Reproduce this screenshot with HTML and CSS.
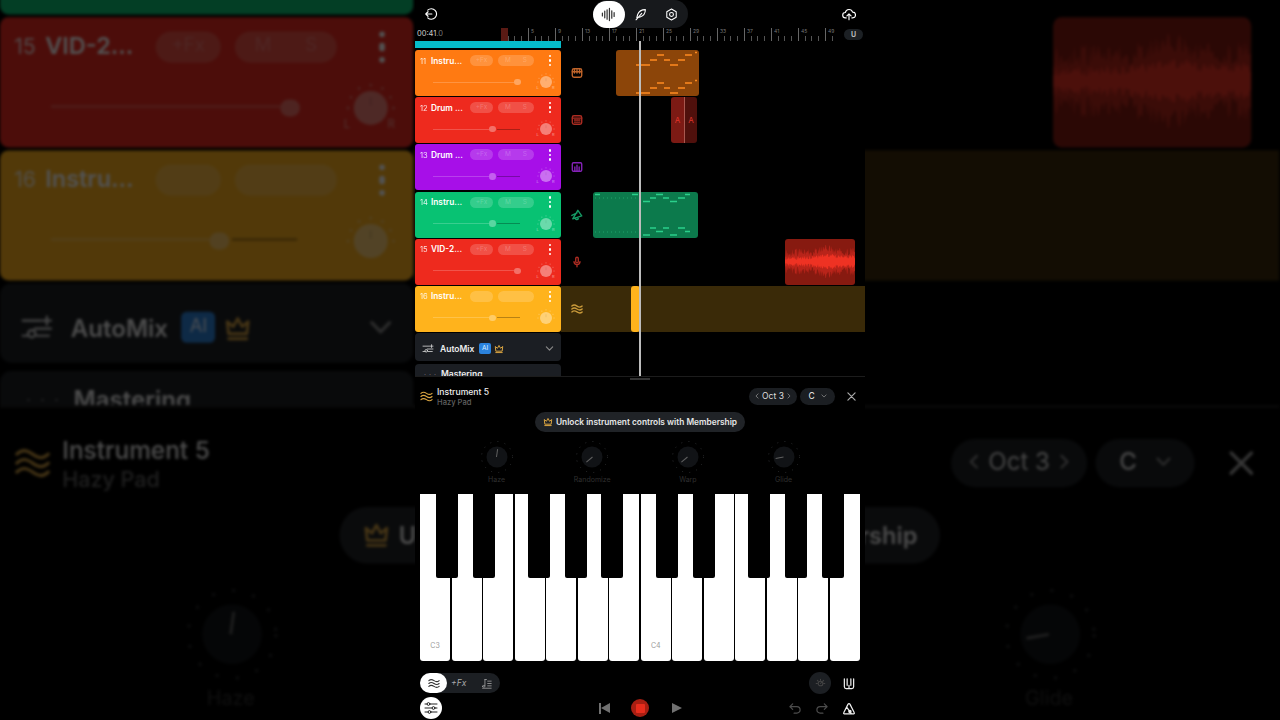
FILE: index.html
```html
<!DOCTYPE html>
<html lang="en">
<head>
    <meta charset="UTF-8">
    <meta name="viewport" content="width=device-width, initial-scale=1.0">
    <title>Instrument 5 - Hazy Pad</title>
    <link rel="stylesheet" href="styles.css">
</head>
<body>
    <svg class="sprite" xmlns="http://www.w3.org/2000/svg">
        <symbol id="i-back" viewBox="0 0 16 16"><path d="M4.300 3.600a6 6 0 1 1 0 8.800M9 8H2M4.600 5.400 2 8l2.600 2.600"/></symbol>
        <symbol id="i-bars" viewBox="0 0 16 16"><path d="M1.500 6.500v3M4 4.500v7M6.500 3v10M9 1.500v13M11.500 4v8M14 6v4"/></symbol>
        <symbol id="i-feather" viewBox="0 0 16 16"><path d="M14 2C9.500 2 6 4 4.500 8l-1 4 4-1C11.500 9.500 14 6.500 14 2zM2.500 14.500 9.500 6.500"/></symbol>
        <symbol id="i-hex" viewBox="0 0 16 16"><path d="M8 1.300 13.800 4.600v6.800L8 14.700 2.200 11.400V4.600z"/><circle cx="8" cy="8" r="2.400"/></symbol>
        <symbol id="i-cloud" viewBox="0 0 16 16"><path d="M4.800 12.500H4a3.100 3.100 0 0 1-.2-6.200 4.300 4.300 0 0 1 8.300-.4 3.300 3.300 0 0 1 .1 6.600h-.9M8 14.500V8M5.600 10.200 8 7.800l2.400 2.400"/></symbol>
        <symbol id="i-wave" viewBox="0 0 14 12"><path d="M1 2.600c2-1.800 3.400-1.800 6 0s4 1.800 6 0M1 6c2-1.800 3.400-1.800 6 0s4 1.800 6 0M1 9.400c2-1.800 3.400-1.800 6 0s4 1.800 6 0"/></symbol>
        <symbol id="i-crown" viewBox="0 0 14 14"><path d="M2.500 9.500 1.800 3.500 4.800 6 7 2l2.200 4 3-2.500-.7 6zM2.500 12h9"/></symbol>
        <symbol id="i-sliders" viewBox="0 0 16 14"><path d="M1 3h9M13 1v4M11 3h4M7 7h8M1 10.500h3M8 10.500h6"/><circle cx="5.500" cy="9.500" r="1.800"/></symbol>
        <symbol id="i-mixer" viewBox="0 0 14 14"><path d="M1 3h2M6 3h7M1 7h7M11 7h2M1 11h3M7 11h6"/><circle cx="4.500" cy="3" r="1.400"/><circle cx="9.500" cy="7" r="1.400"/><circle cx="5.500" cy="11" r="1.400"/></symbol>
        <symbol id="i-chevron" viewBox="0 0 10 10"><path d="M1.500 3.200 5 6.800l3.500-3.600"/></symbol>
        <symbol id="i-keys" viewBox="0 0 14 14"><rect x="1.500" y="2" width="11" height="10" rx="2"/><path d="M1.500 5.500h11M4 3v4M7 3v4M10 3v4"/></symbol>
        <symbol id="i-drum" viewBox="0 0 14 14"><rect x="1.500" y="2" width="11" height="10" rx="2"/><path d="M1.500 4.800h11M4 7h1.500M6.500 7H8M9 7h1.500M4 9.500h1.500M6.500 9.500H8M9 9.500h1.500"/></symbol>
        <symbol id="i-pad" viewBox="0 0 14 14"><rect x="1.500" y="2" width="11" height="10" rx="1.500"/><path d="M4.500 11V7M7 11V5M9.500 11V7"/></symbol>
        <symbol id="i-horn" viewBox="0 0 14 14"><path d="M8 1.500 12.500 8 2 11.500zM5 10.500c0 2 2.500 2.500 3.500 1L7.800 9.500M1 7.500l6-3"/></symbol>
        <symbol id="i-mic" viewBox="0 0 14 14"><rect x="5.500" y="1.500" width="3" height="6.500" rx="1.500" class="solid"/><path d="M3.500 6.500a3.500 3.500 0 0 0 7 0M7 10v2.500"/></symbol>
        <symbol id="i-notes" viewBox="0 0 14 14"><path d="M5 2v8M2 10.500c0-1.500 3-1.500 3 0s-3 1.500-3 0zM5 2h2M8.500 4H13M8.500 7H13M2 13h11M8.500 10H13"/></symbol>
        <symbol id="i-close" viewBox="0 0 10 10"><path d="M1 1l8 8M9 1 1 9"/></symbol>
        <symbol id="i-piano" viewBox="0 0 14 14"><path d="M2 2v8.500a2 2 0 0 0 2 2h6a2 2 0 0 0 2-2V2M5 2v7M7 9v3.500M9 2v7"/></symbol>
        <symbol id="i-undo" viewBox="0 0 14 14"><path d="M4.500 2 1.500 5l3 3M1.500 5H9a3.500 3.500 0 0 1 0 7H6"/></symbol>
        <symbol id="i-redo" viewBox="0 0 14 14"><path d="M9.500 2l3 3-3 3M12.500 5H5a3.500 3.500 0 0 0 0 7h3"/></symbol>
        <symbol id="i-metro" viewBox="0 0 14 14"><path d="M6 2.300a1.100 1.100 0 0 1 2 0l4.700 9.300a.8.800 0 0 1-.7 1.200H2a.8.800 0 0 1-.7-1.200zM4.500 5.500 9.500 12.500"/><circle cx="8" cy="10.300" r="1.200" class="solid-metro"/></symbol>
        <symbol id="i-gear" viewBox="0 0 14 14"><circle cx="7" cy="7" r="3"/><path d="M7 1.500v1.500M11 3l-1 1M12.500 7H11M3 3l1 1M1.500 7H3M7 7l2-2"/></symbol>
        <symbol id="i-pan" viewBox="0 0 24 24"><circle cx="12" cy="12" r="8" class="pan-face"/><path class="pan-tick" d="M12 7v4"/><path class="pan-dots" d="M12 1.200v.1M17.500 2.800v.1M21.300 7v.1M22.700 12v.1M6.500 2.800v.1M2.700 7v.1M1.300 12v.1"/></symbol>
        <symbol id="i-knob" viewBox="0 0 34 34"><circle cx="17" cy="17" r="10.500" class="knob-face"/><circle cx="17" cy="17" r="15.500" class="knob-dots"/></symbol>
    </svg>

    <div class="page">
        <div class="side side-left"></div>

        <main class="stage" id="stage">
            <header class="topbar">
                <div class="topbar-left"><svg class="icon icon-back"><use href="#i-back"/></svg></div>
                <nav class="mode-pill">
                    <span class="mode-active"><svg class="icon icon-mode"><use href="#i-bars"/></svg></span>
                    <span class="mode-item"><svg class="icon icon-mode-w"><use href="#i-feather"/></svg></span>
                    <span class="mode-item"><svg class="icon icon-mode-w"><use href="#i-hex"/></svg></span>
                </nav>
                <div class="topbar-right"><svg class="icon icon-cloud"><use href="#i-cloud"/></svg></div>
            </header>

            <div class="ruler">
                <div class="time">00:41<span class="time-dim">.0</span></div>
                <div class="bars">
                    <span class="loop-mark"></span>
                    <span class="bar">1</span><span class="bar">5</span><span class="bar">9</span><span class="bar">13</span><span class="bar">17</span><span class="bar">21</span><span class="bar">25</span><span class="bar">29</span><span class="bar">33</span><span class="bar">37</span><span class="bar">41</span><span class="bar">45</span><span class="bar bar-end">49</span>
                </div>
                <span class="magnet">U</span>
            </div>

            <div class="arrange">
                <div class="track-col">
                    <div class="cyan-bar"></div>

                    <div class="track orange">
                        <div class="track-top"><span class="track-name"><span class="num">11</span>Instru...</span><span class="pill fx">+Fx</span><span class="pill ms"><span>M</span><span>S</span></span><span class="more"><i></i><i></i><i></i></span></div>
                        <div class="track-bottom"><div class="slider level-full"><span class="fill"></span><span class="thumb"></span></div><div class="pan"><svg><use href="#i-pan"/></svg><span class="pan-l">L</span><span class="pan-r">R</span></div></div>
                    </div>
                    <div class="track red">
                        <div class="track-top"><span class="track-name"><span class="num">12</span>Drum ...</span><span class="pill fx">+Fx</span><span class="pill ms"><span>M</span><span>S</span></span><span class="more"><i></i><i></i><i></i></span></div>
                        <div class="track-bottom"><div class="slider level-mid"><span class="fill"></span><span class="thumb"></span><span class="rest"></span></div><div class="pan"><svg><use href="#i-pan"/></svg><span class="pan-l">L</span><span class="pan-r">R</span></div></div>
                    </div>
                    <div class="track purple">
                        <div class="track-top"><span class="track-name"><span class="num">13</span>Drum ...</span><span class="pill fx">+Fx</span><span class="pill ms"><span>M</span><span>S</span></span><span class="more"><i></i><i></i><i></i></span></div>
                        <div class="track-bottom"><div class="slider level-mid"><span class="fill"></span><span class="thumb"></span><span class="rest"></span></div><div class="pan"><svg><use href="#i-pan"/></svg><span class="pan-l">L</span><span class="pan-r">R</span></div></div>
                    </div>
                    <div class="track green">
                        <div class="track-top"><span class="track-name"><span class="num">14</span>Instru...</span><span class="pill fx">+Fx</span><span class="pill ms"><span>M</span><span>S</span></span><span class="more"><i></i><i></i><i></i></span></div>
                        <div class="track-bottom"><div class="slider level-mid"><span class="fill"></span><span class="thumb"></span><span class="rest"></span></div><div class="pan"><svg><use href="#i-pan"/></svg><span class="pan-l">L</span><span class="pan-r">R</span></div></div>
                    </div>
                    <div class="track red">
                        <div class="track-top"><span class="track-name"><span class="num">15</span>VID-2...</span><span class="pill fx">+Fx</span><span class="pill ms"><span>M</span><span>S</span></span><span class="more"><i></i><i></i><i></i></span></div>
                        <div class="track-bottom"><div class="slider level-full"><span class="fill"></span><span class="thumb"></span></div><div class="pan"><svg><use href="#i-pan"/></svg><span class="pan-l">L</span><span class="pan-r">R</span></div></div>
                    </div>
                    <div class="track amber">
                        <div class="track-top"><span class="track-name"><span class="num">16</span>Instru...</span><span class="pill fx"></span><span class="pill ms"></span><span class="more"><i></i><i></i><i></i></span></div>
                        <div class="track-bottom"><div class="slider level-mid"><span class="fill"></span><span class="thumb"></span><span class="rest"></span></div><div class="pan"><svg><use href="#i-pan"/></svg></div></div>
                    </div>

                    <div class="card">
                        <svg class="icon card-icon"><use href="#i-sliders"/></svg>
                        <span class="card-title">AutoMix</span>
                        <span class="ai-badge">AI</span>
                        <svg class="icon crown"><use href="#i-crown"/></svg>
                        <svg class="icon card-chevron"><use href="#i-chevron"/></svg>
                    </div>
                    <div class="card card-next">
                        <span class="card-dots">&#8942;&#8942;&#8942;</span>
                        <span class="card-title">Mastering</span>
                    </div>
                </div>

                <div class="lane-col">
                    <div class="lane c-orange">
                        <svg class="icon lane-icon"><use href="#i-keys"/></svg>
                        <svg class="clip clip-11" viewBox="0 0 83 46"><path class="dash" d="M41 5h7M69 5h7M34 10h7M48 10h6M62 10h7M27 15h7M54 15h8M20 15h7M41 33h7M69 33h7M34 38h7M48 38h6M62 38h7M27 43h7M54 43h8M20 43h7M79 2.500h2M79 30.500h2"/></svg>
                    </div>
                    <div class="lane c-red">
                        <svg class="icon lane-icon"><use href="#i-drum"/></svg>
                        <div class="clip clip-12"><span class="drum-a">A</span><span class="drum-b">A</span></div>
                    </div>
                    <div class="lane c-purple">
                        <svg class="icon lane-icon"><use href="#i-pad"/></svg>
                    </div>
                    <div class="lane c-green">
                        <svg class="icon lane-icon"><use href="#i-horn"/></svg>
                        <svg class="clip clip-14" viewBox="0 0 105 46"><path class="dash-g" d="M2 2.500h5M39 2.500h6M63 2.500h7M92 2.500h5M57 6h6M70 6h6M85 6h7M50 9.500h7M77 9.500h7M57 36h6M70 36h6M85 36h7M63 39.500h7M92 39.500h5M50 43h7M77 43h7"/><path class="dots-g" d="M2 6h45M2 40h45"/></svg>
                    </div>
                    <div class="lane c-red">
                        <svg class="icon lane-icon"><use href="#i-mic"/></svg>
                        <svg class="clip clip-15" id="waveClip" viewBox="0 0 70 46"></svg>
                    </div>
                    <div class="lane lane-active c-amber">
                        <svg class="icon lane-icon"><use href="#i-wave"/></svg>
                        <div class="clip clip-16"></div>
                    </div>
                </div>

                <div class="playhead"></div>
            </div>

            <section class="panel">
                <div class="handle"></div>
                <div class="panel-head">
                    <svg class="icon head-wave"><use href="#i-wave"/></svg>
                    <div class="head-text">
                        <div class="head-title">Instrument 5</div>
                        <div class="head-sub">Hazy Pad</div>
                    </div>
                    <div class="oct-pill"><svg class="icon pill-arrow arrow-left"><use href="#i-chevron"/></svg>Oct 3<svg class="icon pill-arrow arrow-right"><use href="#i-chevron"/></svg></div>
                    <div class="key-pill">C<svg class="icon pill-chevron"><use href="#i-chevron"/></svg></div>
                    <svg class="icon head-close"><use href="#i-close"/></svg>
                </div>

                <div class="unlock-row">
                    <div class="unlock"><svg class="icon crown"><use href="#i-crown"/></svg>Unlock instrument controls with Membership</div>
                </div>

                <div class="knobs">
                    <div class="knob"><div class="knob-dial"><svg><use href="#i-knob"/></svg><span class="needle needle-haze"></span></div><span class="knob-label">Haze</span></div>
                    <div class="knob"><div class="knob-dial"><svg><use href="#i-knob"/></svg><span class="needle needle-rand"></span></div><span class="knob-label">Randomize</span></div>
                    <div class="knob"><div class="knob-dial"><svg><use href="#i-knob"/></svg><span class="needle needle-warp"></span></div><span class="knob-label">Warp</span></div>
                    <div class="knob"><div class="knob-dial"><svg><use href="#i-knob"/></svg><span class="needle needle-glide"></span></div><span class="knob-label">Glide</span></div>
                </div>

                <div class="keyboard">
                    <div class="white-key">C3</div><div class="white-key"></div><div class="white-key"></div><div class="white-key"></div><div class="white-key"></div><div class="white-key"></div><div class="white-key"></div>
                    <div class="white-key">C4</div><div class="white-key"></div><div class="white-key"></div><div class="white-key"></div><div class="white-key"></div><div class="white-key"></div><div class="white-key"></div>
                    <span class="black-key b1"></span><span class="black-key b2"></span><span class="black-key b3"></span><span class="black-key b4"></span><span class="black-key b5"></span>
                    <span class="black-key b6"></span><span class="black-key b7"></span><span class="black-key b8"></span><span class="black-key b9"></span><span class="black-key b10"></span>
                </div>

                <div class="tools-row">
                    <div class="tabs">
                        <span class="tab-active"><svg class="icon tab-wave"><use href="#i-wave"/></svg></span>
                        <span class="tab-fx">+Fx</span>
                        <svg class="icon tab-notes"><use href="#i-notes"/></svg>
                    </div>
                    <div class="tools-right">
                        <span class="gear-btn"><svg class="icon gear"><use href="#i-gear"/></svg></span>
                        <svg class="icon tool-w"><use href="#i-piano"/></svg>
                    </div>
                </div>

                <div class="transport-row">
                    <div class="transport-left"><span class="mixer-btn"><svg class="icon mixer"><use href="#i-mixer"/></svg></span></div>
                    <div class="transport">
                        <span class="t-btn"><span class="prev-bar"></span><span class="prev-tri"></span></span>
                        <span class="t-btn"><span class="stop"><span class="stop-sq"></span></span></span>
                        <span class="t-btn"><span class="play-tri"></span></span>
                    </div>
                    <div class="transport-right">
                        <svg class="icon tool-dim"><use href="#i-undo"/></svg>
                        <svg class="icon tool-dim"><use href="#i-redo"/></svg>
                        <svg class="icon tool-w"><use href="#i-metro"/></svg>
                    </div>
                </div>
            </section>
        </main>

        <div class="side side-right"></div>
    </div>

    <script src="app.js"></script>
</body>
</html>
```

FILE: styles.css
```css
* {
    box-sizing: border-box;
}
html, body {
    margin: 0;
    height: 720px;
    overflow: hidden;
    background: #000;
}
body {
    font-family: Inter, "Liberation Sans", sans-serif;
    color: #fff;
}
.sprite {
    display: none;
}
.icon {
    display: block;
    fill: none;
    stroke: currentColor;
    stroke-width: 1.3;
    stroke-linecap: round;
    stroke-linejoin: round;
    flex: none;
}

/* page: video in the middle, zoomed and dimmed copies at the sides */
.page {
    display: grid;
    grid-template-columns: 415px 450px 415px;
    height: 720px;
}
.side {
    overflow: hidden;
    height: 720px;
}
.side .stage {
    transform-origin: 0 0;
    filter: brightness(0.32) blur(0.5px);
}
.side-left .stage {
    transform: translate(0, -659px) scale(2.83);
}
.side-right .stage {
    transform: translate(-859px, -659px) scale(2.83);
}
.stage {
    position: relative;
    width: 450px;
    height: 720px;
    display: flex;
    flex-direction: column;
    background: #000;
    overflow: hidden;
}

/* top bar */
.topbar {
    height: 28px;
    display: grid;
    grid-template-columns: 1fr auto 1fr;
    align-items: center;
    flex: none;
}
.topbar-left {
    padding-left: 9px;
}
.icon-back {
    width: 14px;
    height: 14px;
    color: #fff;
}
.topbar-right {
    display: flex;
    justify-content: flex-end;
    padding-right: 9px;
}
.icon-cloud {
    width: 14px;
    height: 14px;
    color: #fff;
}
.mode-pill {
    width: 95px;
    height: 28px;
    border-radius: 14px;
    background: #17191c;
    display: flex;
    align-items: center;
}
.mode-active {
    width: 32px;
    height: 27px;
    border-radius: 14px;
    background: #fff;
    display: flex;
    align-items: center;
    justify-content: center;
}
.icon-mode {
    width: 15px;
    height: 15px;
    color: #333;
}
.mode-item {
    width: 31px;
    display: flex;
    justify-content: center;
}
.icon-mode-w {
    width: 13px;
    height: 13px;
    color: #fff;
}

/* ruler */
.ruler {
    height: 13px;
    flex: none;
    display: flex;
    position: relative;
}
.time {
    width: 86px;
    padding-left: 2px;
    font-size: 7.500px;
    line-height: 12px;
    color: #ccc;
}
.time-dim {
    color: #777;
}
.bars {
    display: flex;
    position: relative;
}
.bar {
    width: 27px;
    height: 13px;
    padding-left: 2px;
    border-left: 1px solid #666;
    font-size: 5px;
    line-height: 7px;
    color: #777;
    background: repeating-linear-gradient(90deg, transparent 0, transparent 5.750px, #555 5.750px, #555 6.750px) 0 100% / 100% 5px no-repeat;
}
.bar-end {
    width: 15px;
}
.loop-mark {
    position: absolute;
    left: 0;
    top: 0;
    width: 7px;
    height: 13px;
    background: #5a1a14;
}
.magnet {
    margin-left: auto;
    margin-right: 2px;
    margin-top: 1px;
    width: 19px;
    height: 11px;
    border-radius: 6px;
    background: #1c2024;
    font-size: 7px;
    line-height: 11px;
    font-weight: 700;
    text-align: center;
    color: #bbb;
}

/* arrange view */
.arrange {
    position: relative;
    height: 336px;
    flex: none;
    overflow: hidden;
    display: grid;
    grid-template-columns: 146px 1fr;
}
.cyan-bar {
    height: 7px;
    margin-bottom: 2px;
    background: #05bccb;
}
.track {
    height: 46px;
    margin-bottom: 1.200px;
    border-radius: 3px;
    padding: 5px 0 0 5px;
}
.orange { background: #ff7a12; }
.red { background: #ee2a1e; }
.purple { background: #a70fe8; }
.green { background: #08c273; }
.amber { background: #ffb31c; }
.track-top {
    display: flex;
    height: 11px;
    align-items: center;
}
.track-name {
    width: 50px;
    font-size: 8.300px;
    font-weight: 600;
    white-space: nowrap;
    display: flex;
    align-items: baseline;
}
.num {
    width: 11px;
    font-weight: 400;
    font-size: 7.500px;
    opacity: 0.85;
}
.pill {
    height: 11px;
    border-radius: 6px;
    background: rgba(255, 255, 255, 0.18);
    font-size: 6.500px;
    line-height: 11px;
    color: rgba(255, 255, 255, 0.22);
}
.fx {
    width: 23px;
    text-align: center;
}
.ms {
    width: 36px;
    margin-left: 5px;
    display: flex;
    justify-content: space-between;
    padding: 0 7px;
}
.more {
    margin-left: auto;
    margin-right: 10px;
    display: flex;
    flex-direction: column;
    gap: 2px;
}
.more i {
    width: 2.500px;
    height: 2.500px;
    border-radius: 50%;
    background: #fff;
}
.track-bottom {
    display: flex;
    align-items: center;
    margin-top: 7px;
    padding-left: 13px;
    height: 18px;
}
.slider {
    width: 88px;
    height: 6px;
    display: flex;
    align-items: center;
}
.fill {
    height: 1px;
    background: rgba(255, 255, 255, 0.2);
}
.thumb {
    width: 6.500px;
    height: 6.500px;
    border-radius: 50%;
    background: rgba(255, 255, 255, 0.33);
    flex: none;
}
.rest {
    height: 1px;
    width: 23px;
    margin-left: 1px;
    background: rgba(0, 0, 0, 0.28);
}
.level-full .fill {
    width: 81px;
}
.level-mid .fill {
    width: 56px;
}
.pan {
    position: relative;
    width: 18px;
    height: 18px;
    margin-left: 15.500px;
}
.pan svg {
    display: block;
    width: 18px;
    height: 18px;
}
.pan-face {
    fill: rgba(255, 255, 255, 0.4);
}
.pan-tick {
    stroke: rgba(0, 0, 0, 0.1);
    stroke-width: 1;
}
.pan-dots {
    stroke: rgba(255, 255, 255, 0.5);
    stroke-width: 1;
    stroke-linecap: round;
    fill: none;
}
.pan-l, .pan-r {
    position: absolute;
    top: 12px;
    font-size: 4px;
    color: rgba(255, 255, 255, 0.5);
}
.pan-l {
    left: 0;
}
.pan-r {
    right: 0;
}

/* cards under the tracks */
.card {
    height: 28px;
    margin-top: 1.200px;
    margin-bottom: 3px;
    border-radius: 4px;
    background: #1b1e23;
    display: flex;
    align-items: center;
    padding: 3px 7px 0;
}
.card-icon {
    width: 12px;
    height: 10px;
    color: #ddd;
    stroke-width: 1.100;
}
.card-title {
    margin-left: 6px;
    font-size: 8.500px;
    font-weight: 600;
    color: #eee;
}
.ai-badge {
    margin-left: 5px;
    width: 11.500px;
    height: 11px;
    border-radius: 2px;
    background: #2b82dc;
    font-size: 6.500px;
    line-height: 11px;
    text-align: center;
    color: #dfeeff;
}
.crown {
    width: 10px;
    height: 10px;
    margin-left: 3px;
    color: #d9a441;
    stroke-width: 1.400;
}
.card-chevron {
    width: 9px;
    height: 9px;
    margin-left: auto;
    color: #888;
}
.card-next {
    align-items: flex-start;
    padding-top: 4.500px;
}
.card-next .card-title {
    line-height: 11px;
}
.card-dots {
    font-size: 6px;
    line-height: 14px;
    color: #777;
    letter-spacing: -1px;
    width: 13px;
}

/* lanes */
.lane-col {
    padding-top: 9px;
}
.lane {
    position: relative;
    height: 47.200px;
    display: flex;
    align-items: center;
    padding-left: 10px;
    padding-bottom: 1.200px;
}
.lane-icon {
    width: 12px;
    height: 12px;
    stroke-width: 1.600;
}
.c-orange { color: #c0642a; }
.c-red { color: #ac2c22; }
.c-purple { color: #8522b8; }
.c-green { color: #159a64; }
.c-amber { color: #c99a3a; }
.lane .solid {
    fill: currentColor;
}
.lane-active::before {
    content: "";
    position: absolute;
    left: 0;
    right: 0;
    top: 0;
    height: 46px;
    background: #3a2a08;
}
.lane-active .lane-icon {
    position: relative;
}
.clip {
    position: absolute;
    top: 0;
    height: 46px;
    border-radius: 3px;
    overflow: hidden;
}
.clip-11 {
    left: 55px;
    width: 83px;
    background: #8c4509;
}
.dash {
    stroke: #ff8a20;
    stroke-width: 1.400;
    fill: none;
}
.clip-12 {
    left: 110px;
    width: 26px;
    display: flex;
    font-size: 8px;
    line-height: 46px;
    text-align: center;
    color: #e0352a;
}
.drum-a {
    width: 14px;
    background: #7c1a14;
    border-right: 1px solid #a8584f;
}
.drum-b {
    flex: 1;
    background: #4f100c;
}
.clip-14 {
    left: 32px;
    width: 105px;
    background: #0c7a4c;
}
.dash-g {
    stroke: #2ad08a;
    stroke-width: 1.300;
    fill: none;
}
.dots-g {
    stroke: #1fa26a;
    stroke-width: 1;
    stroke-dasharray: 1 3;
    fill: none;
}
.clip-15 {
    left: 224px;
    width: 70px;
    background: #871a10;
}
.wave-outer {
    fill: #b8241a;
}
.wave-inner {
    fill: #ee3223;
}
.clip-16 {
    left: 70px;
    width: 9px;
    background: #ffb31c;
}
.playhead {
    position: absolute;
    left: 224px;
    top: -5px;
    bottom: 0;
    width: 1.500px;
    background: #bdbdbd;
}

/* instrument panel */
.panel {
    flex: 1;
    position: relative;
    background: #000;
    border-top: 1px solid #1c1c1c;
    margin-top: -1px;
}
.handle {
    width: 20px;
    height: 2px;
    margin: 1px auto 6px;
    background: #333;
}
.panel-head {
    height: 20px;
    display: flex;
    align-items: center;
    padding-left: 5px;
}
.head-wave {
    width: 13px;
    height: 13px;
    color: #d9a441;
    stroke-width: 1.200;
}
.head-text {
    margin-left: 4px;
    margin-top: 2px;
    width: 312px;
}
.head-title {
    font-size: 8.650px;
    line-height: 11px;
    font-weight: 500;
    color: #eee;
}
.head-sub {
    font-size: 7.600px;
    line-height: 10px;
    font-weight: 500;
    color: #606060;
}
.oct-pill, .key-pill {
    height: 17px;
    border-radius: 9px;
    background: #1b1e22;
    display: flex;
    align-items: center;
    justify-content: center;
    font-size: 8.500px;
    color: #ddd;
}
.oct-pill {
    width: 48px;
    gap: 2px;
}
.key-pill {
    width: 35px;
    margin-left: 3px;
    gap: 6px;
    font-weight: 500;
}
.pill-arrow {
    width: 6px;
    height: 6px;
    color: #999;
    stroke-width: 1.200;
}
.arrow-left {
    transform: rotate(90deg);
}
.arrow-right {
    transform: rotate(-90deg);
}
.pill-chevron {
    width: 6px;
    height: 6px;
    color: #888;
}
.head-close {
    width: 9px;
    height: 9px;
    margin-left: 12px;
    color: #aaa;
}
.unlock-row {
    margin-top: 6px;
    display: flex;
    justify-content: center;
}
.unlock {
    width: 210px;
    height: 20px;
    border-radius: 10px;
    background: #202327;
    display: flex;
    align-items: center;
    justify-content: center;
    gap: 3px;
    font-size: 8.350px;
    font-weight: 600;
    color: #e6e6e6;
    white-space: nowrap;
}
.unlock .crown {
    margin-left: 0;
}
.knobs {
    margin-top: 8px;
    padding-left: 33.700px;
    display: grid;
    grid-template-columns: repeat(4, 95.700px);
}
.knob {
    display: flex;
    flex-direction: column;
    align-items: center;
}
.knob-dial {
    position: relative;
    width: 34px;
    height: 34px;
}
.knob-dial svg {
    display: block;
    width: 34px;
    height: 34px;
}
.knob-face {
    fill: #111316;
}
.knob-dots {
    fill: none;
    stroke: #2c2e30;
    stroke-width: 1;
    stroke-dasharray: 1 6.300;
}
.needle {
    position: absolute;
    left: 16.500px;
    top: 9px;
    width: 1px;
    height: 8px;
    background: #606060;
    transform-origin: 50% 100%;
}
.needle-haze {
    transform: rotate(8deg);
}
.needle-rand {
    transform: rotate(-130deg);
}
.needle-warp {
    transform: rotate(-130deg);
}
.needle-glide {
    transform: rotate(-100deg);
}
.knob-label {
    margin-top: 1px;
    font-size: 7px;
    line-height: 9px;
    color: #303030;
}
.keyboard {
    position: relative;
    margin: 10px 5px 0;
    height: 167px;
    display: grid;
    grid-template-columns: repeat(14, 1fr);
    column-gap: 1.500px;
}
.white-key {
    background: #fff;
    border-radius: 0 0 3px 3px;
    display: flex;
    align-items: flex-end;
    justify-content: center;
    padding-bottom: 11px;
    font-size: 7px;
    color: #999;
}
.black-key {
    position: absolute;
    top: 0;
    width: 22px;
    height: 84px;
    background: #000;
    border-radius: 0 0 2px 2px;
}
.b1 { left: 16px; }
.b2 { left: 52.500px; }
.b3 { left: 108px; }
.b4 { left: 144.500px; }
.b5 { left: 181px; }
.b6 { left: 236px; }
.b7 { left: 273px; }
.b8 { left: 328px; }
.b9 { left: 365px; }
.b10 { left: 402px; }
.tools-row {
    margin-top: 12px;
    padding: 0 7px 0 5px;
    height: 20px;
    display: flex;
    justify-content: space-between;
    align-items: center;
}
.tabs {
    width: 80px;
    height: 20px;
    border-radius: 10px;
    background: #1c1f23;
    display: flex;
    align-items: center;
}
.tab-active {
    width: 27px;
    height: 20px;
    border-radius: 10px;
    background: #fff;
    display: flex;
    align-items: center;
    justify-content: center;
}
.tab-wave {
    width: 12px;
    height: 11px;
    color: #333;
}
.tab-fx {
    margin-left: 4px;
    font-size: 8.500px;
    font-style: italic;
    color: #aaa;
}
.tab-notes {
    margin-left: 15px;
    width: 11px;
    height: 11px;
    color: #aaa;
    stroke-width: 1;
}
.tools-right {
    display: flex;
    align-items: center;
    gap: 9px;
}
.gear-btn {
    width: 22px;
    height: 22px;
    border-radius: 50%;
    background: #1c1f23;
    display: flex;
    align-items: center;
    justify-content: center;
}
.gear {
    width: 11px;
    height: 11px;
    color: #444;
}
.tool-w {
    width: 18px;
    height: 13px;
    color: #f0f0f0;
}
.solid-metro {
    fill: currentColor;
}
.tool-dim {
    width: 18px;
    height: 13px;
    color: #4c4c4c;
}
.transport-row {
    margin-top: 4px;
    padding: 0 7px 0 5px;
    height: 22px;
    display: grid;
    grid-template-columns: 1fr auto 1fr;
    align-items: center;
}
.mixer-btn {
    width: 22px;
    height: 22px;
    border-radius: 50%;
    background: #fff;
    display: flex;
    align-items: center;
    justify-content: center;
}
.mixer {
    width: 14px;
    height: 14px;
    color: #222;
    stroke-width: 1;
}
.transport {
    display: flex;
    gap: 18px;
    margin-left: 2px;
}
.t-btn {
    width: 18px;
    height: 18px;
    display: flex;
    align-items: center;
    justify-content: center;
}
.prev-bar {
    width: 2px;
    height: 11px;
    background: #707070;
}
.prev-tri {
    width: 0;
    height: 0;
    border-style: solid;
    border-width: 5.500px 9px 5.500px 0;
    border-color: transparent #707070 transparent transparent;
}
.play-tri {
    width: 0;
    height: 0;
    margin-left: 2px;
    border-style: solid;
    border-width: 5.500px 0 5.500px 10px;
    border-color: transparent transparent transparent #707070;
}
.stop {
    width: 18px;
    height: 18px;
    border-radius: 50%;
    background: #a81e12;
    display: flex;
    align-items: center;
    justify-content: center;
}
.stop-sq {
    width: 9px;
    height: 9px;
    border-radius: 1px;
    background: #e82c1c;
}
.transport-right {
    display: flex;
    justify-content: flex-end;
    gap: 9px;
}
```

FILE: app.js
```js
// draws the audio clip waveform, then copies the stage into the two blurred side panels
function noise(x) {
    const n = Math.sin(x * 12.9898) * 43758.5453;
    return n - Math.floor(n);
}

function drawWaveform() {
    const svg = document.getElementById('waveClip');
    const top = [];
    const topInner = [];
    const bottom = [];
    const bottomInner = [];

    for (let x = 0; x <= 70; x += 0.5) {
        const swell = 2 + 3 * Math.exp(-Math.pow((x - 42) / 8, 2)) + 2 * (x / 70);
        const amp = swell + 2 + noise(x) * 9;
        const core = swell * 0.7 + noise(x + 100) * 4;
        top.push(x + ',' + (22.5 - amp).toFixed(1));
        bottom.unshift(x + ',' + (22.5 + amp).toFixed(1));
        topInner.push(x + ',' + (22.5 - core).toFixed(1));
        bottomInner.unshift(x + ',' + (22.5 + core).toFixed(1));
    }

    svg.innerHTML =
        '<polygon class="wave-outer" points="' + top.concat(bottom).join(' ') + '"/>' +
        '<polygon class="wave-inner" points="' + topInner.concat(bottomInner).join(' ') + '"/>';
}

function copyStage() {
    const stage = document.getElementById('stage');
    document.querySelectorAll('.side').forEach(function (side) {
        const copy = stage.cloneNode(true);
        copy.removeAttribute('id');
        copy.setAttribute('aria-hidden', 'true');
        copy.querySelector('#waveClip').removeAttribute('id');
        side.appendChild(copy);
    });
}

drawWaveform();
copyStage();
```
